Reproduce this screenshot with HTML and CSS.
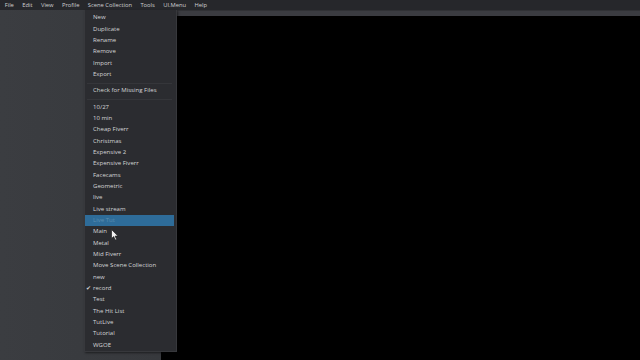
FILE: index.html
```html
<!DOCTYPE html>
<html>
<head>
<meta charset="utf-8">
<link rel="stylesheet" href="styles.css">
</head>
<body>
<div class="app">
  <div class="menubar">
    <span class="mb-item">File</span>
    <span class="mb-item">Edit</span>
    <span class="mb-item">View</span>
    <span class="mb-item">Profile</span>
    <span class="mb-item">Scene Collection</span>
    <span class="mb-item">Tools</span>
    <span class="mb-item">UI.Menu</span>
    <span class="mb-item">Help</span>
  </div>
  <div class="main">
    <div class="side"></div>
    <div class="content">
      <div class="strip"></div>
      <div class="preview"></div>
    </div>
  </div>
</div>

<div class="dropdown">
  <div class="mi">New</div>
  <div class="mi">Duplicate</div>
  <div class="mi">Rename</div>
  <div class="mi">Remove</div>
  <div class="mi">Import</div>
  <div class="mi">Export</div>
  <div class="sep"></div>
  <div class="mi">Check for Missing Files</div>
  <div class="sep"></div>
  <div class="mi">10/27</div>
  <div class="mi">10 min</div>
  <div class="mi">Cheap Fiverr</div>
  <div class="mi">Christmas</div>
  <div class="mi">Expensive 2</div>
  <div class="mi">Expensive Fiverr</div>
  <div class="mi">Facecams</div>
  <div class="mi">Geometric</div>
  <div class="mi">live</div>
  <div class="mi">Live stream</div>
  <div class="mi active">Live Tut</div>
  <div class="mi">Main</div>
  <div class="mi">Metal</div>
  <div class="mi">Mid Fiverr</div>
  <div class="mi">Move Scene Collection</div>
  <div class="mi">new</div>
  <div class="mi checked"><span class="check">✔</span>record</div>
  <div class="mi">Test</div>
  <div class="mi">The Hit List</div>
  <div class="mi">TutLive</div>
  <div class="mi">Tutorial</div>
  <div class="mi">WGOE</div>
</div>

<svg class="cursor" width="8" height="12" viewBox="0 0 8 12">
  <path d="M0.5 0.5 L0.5 9.5 L2.7 7.6 L4.2 11 L5.6 10.4 L4.1 7.1 L7 7.1 Z" fill="#f2f2f2" stroke="#222" stroke-width="0.7"/>
</svg>
</body>
</html>
```

FILE: styles.css
```css
html, body {
  margin: 0;
  padding: 0;
  background: #000;
}
body {
  width: 640px;
  height: 360px;
  overflow: hidden;
  position: relative;
  font-family: "Open Sans", "Noto Sans", sans-serif;
}
.app {
  display: flex;
  flex-direction: column;
  height: 360px;
}
.menubar {
  height: 10px;
  background: #26272b;
  display: flex;
  align-items: center;
  padding-left: 0.5px;
}
.mb-item {
  font-size: 5.8px;
  color: #cfd0d2;
  padding: 0 4.2px;
  line-height: 10px;
}
.main {
  flex: 1;
  display: flex;
}
.side {
  width: 161px;
  background: linear-gradient(90deg, #3b3d41, #37393d);
}
.content {
  flex: 1;
  display: flex;
  flex-direction: column;
}
.strip {
  height: 6px;
  background: #3b3c41;
  border-top: 1px solid #303135;
  box-sizing: border-box;
}
.preview {
  flex: 1;
  background: #000;
}
.dropdown {
  position: absolute;
  left: 84px;
  top: 10px;
  width: 93px;
  height: 342px;
  box-sizing: border-box;
  background: #2b2c30;
  border: 1px solid #37383c;
  border-top: none;
  padding-top: 2.3px;
  box-shadow: 1px 1px 2px rgba(0,0,0,0.5);
}
.mi {
  position: relative;
  height: 11.33px;
  line-height: 11.33px;
  font-size: 6.05px;
  color: #d4d5d7;
  padding-left: 8px;
  margin: 0 2px 0 0;
  white-space: nowrap;
}
.mi.active {
  background: #2e6c99;
  color: #5b8cb0;
}
.sep {
  height: 5.1px;
  position: relative;
}
.sep::after {
  content: "";
  position: absolute;
  left: 2px;
  right: 4px;
  top: 2.5px;
  height: 1px;
  background: #35363a;
}
.check {
  position: absolute;
  left: 1px;
  top: 0;
  font-size: 5.5px;
  color: #d4d5d7;
}
.cursor {
  position: absolute;
  left: 111px;
  top: 229px;
}
```
